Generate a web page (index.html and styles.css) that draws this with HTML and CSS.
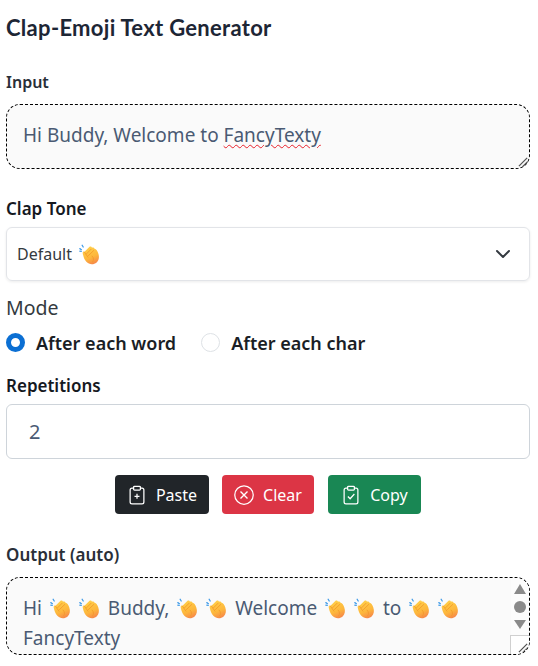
FILE: index.html
```html
<!DOCTYPE html>
<html lang="en">
<head>
    <meta charset="UTF-8">
    <meta name="viewport" content="width=device-width, initial-scale=1.0">
    <title>Clap-Emoji Text Generator</title>
    <link rel="stylesheet" href="styles.css">
</head>
<body>
    <!-- shared shapes: clap emoji and textarea resize grip -->
    <svg class="defs" width="0" height="0">
        <defs>
            <linearGradient id="clap-fill" x1="0.3" y1="0" x2="0.7" y2="1">
                <stop offset="0" stop-color="#ffd04a"/>
                <stop offset="0.6" stop-color="#fdb73c"/>
                <stop offset="1" stop-color="#f6864a"/>
            </linearGradient>
            <symbol id="clap" viewBox="0 0 20 20">
                <path d="M.8 4.400l1.500 1M3 1.200l1 1.700M.8 6.900l1.300.1" fill="none" stroke="#3f9be8" stroke-width="1.200" stroke-linecap="round"/>
                <path d="M3.600 9.200C3.200 8 4 7.200 5 7.500L9.800 2.800C10.800 2 12 2.400 12.300 3.400 13.300 3 14.500 3.500 14.800 4.600 16.500 5 17.600 6.800 18.400 9 19.400 12 19.200 15.200 16.800 17.600 14 20 9.600 19.800 7 17 5 14.800 4.200 12 3.600 9.200Z" fill="url(#clap-fill)"/>
                <path d="M7 9.500L11.500 5M9 11L14 6.200M5 7.500L8.500 12.500M12.500 11.500C14.200 13.200 14.200 15.500 13 17" fill="none" stroke="#f2992b" stroke-width="0.800" stroke-linecap="round"/>
            </symbol>
            <symbol id="grip" viewBox="0 0 12 12">
                <path d="M1 10L10 1M5 10.500L10.500 5" fill="none" stroke="#555" stroke-width="1.400"/>
            </symbol>
        </defs>
    </svg>

    <h1>Clap-Emoji Text Generator</h1>

    <label class="field-label input-label">Input</label>
    <div class="text-box input-box">
        Hi Buddy, Welcome to <span class="misspelled">FancyTexty</span>
        <svg class="grip"><use href="#grip"/></svg>
    </div>

    <label class="field-label tone-label">Clap Tone</label>
    <div class="select-box">
        <span class="select-value">Default <svg class="clap"><use href="#clap"/></svg></span>
        <svg class="chevron" viewBox="0 0 16 16" width="16" height="16"><path d="M2 5l6 6 6-6" fill="none" stroke="#343a40" stroke-width="2" stroke-linecap="round" stroke-linejoin="round"/></svg>
    </div>

    <div class="mode-title">Mode</div>
    <div class="mode-row">
        <span class="radio radio-on"></span><span class="radio-text">After each word</span>
        <span class="radio"></span><span class="radio-text">After each char</span>
    </div>

    <label class="field-label reps-label">Repetitions</label>
    <div class="number-box">2</div>

    <div class="actions">
        <button class="btn btn-dark">
            <svg viewBox="0 0 16 16" width="20" height="20"><path d="M8 7v4M6 9h4M5 2.500H4A1.500 1.500 0 0 0 2.500 4v9.500A1.500 1.500 0 0 0 4 15h8a1.500 1.500 0 0 0 1.500-1.500V4A1.500 1.500 0 0 0 12 2.500h-1M6 1h4a.7.7 0 0 1 .7.7v1.600a.7.7 0 0 1-.7.7H6a.7.7 0 0 1-.7-.7V1.700A.7.7 0 0 1 6 1z" fill="none" stroke="#fff" stroke-width="1"/></svg>
            Paste
        </button>
        <button class="btn btn-red">
            <svg viewBox="0 0 16 16" width="20" height="20"><circle cx="8" cy="8" r="7.400" fill="none" stroke="#fff" stroke-width="1"/><path d="M5.200 5.200l5.600 5.600M10.800 5.200l-5.600 5.600" fill="none" stroke="#fff" stroke-width="1.100"/></svg>
            Clear
        </button>
        <button class="btn btn-green">
            <svg viewBox="0 0 16 16" width="20" height="20"><path d="M5.500 9.200L7.300 11l3.400-3.800M5 2.500H4A1.500 1.500 0 0 0 2.500 4v9.500A1.500 1.500 0 0 0 4 15h8a1.500 1.500 0 0 0 1.500-1.500V4A1.500 1.500 0 0 0 12 2.500h-1M6 1h4a.7.7 0 0 1 .7.7v1.600a.7.7 0 0 1-.7.7H6a.7.7 0 0 1-.7-.7V1.700A.7.7 0 0 1 6 1z" fill="none" stroke="#fff" stroke-width="1"/></svg>
            Copy
        </button>
    </div>

    <label class="field-label output-label">Output (auto)</label>
    <div class="text-box output-box">
        <div class="output-text">
            Hi <svg class="clap"><use href="#clap"/></svg> <svg class="clap"><use href="#clap"/></svg> Buddy, <svg class="clap"><use href="#clap"/></svg> <svg class="clap"><use href="#clap"/></svg> Welcome <svg class="clap"><use href="#clap"/></svg> <svg class="clap"><use href="#clap"/></svg> to <svg class="clap"><use href="#clap"/></svg> <svg class="clap"><use href="#clap"/></svg> FancyTexty
        </div>
        <div class="fake-scroll">
            <span class="arrow-up"></span>
            <span class="thumb"></span>
            <span class="arrow-down"></span>
        </div>
        <div class="corner"><svg class="grip"><use href="#grip"/></svg></div>
    </div>
</body>
</html>
```

FILE: styles.css
```css
body { margin: 0; padding: 0 8px 0 6px; background: #fff; font-family: "Noto Sans", "Open Sans", sans-serif; color: #212529; }
.defs { position: absolute; }
h1 { margin: 0; padding-top: 14px; font-family: Lato, sans-serif; font-size: 22px; line-height: 28px; font-weight: 700; letter-spacing: 0.3px; color: #1d2635; }
.field-label { display: block; font-size: 17px; line-height: 22px; font-weight: 600; color: #2a2f38; }
.input-label { margin-top: 29px; font-size: 16px; }
.text-box { box-sizing: border-box; position: relative; border: 1px dashed #000; border-radius: 14px; background: #fafafa; color: #4a5a73; font-size: 19px; }
.input-box { height: 65px; margin-top: 11px; padding: 17px 16px; line-height: 27px; }
.misspelled { text-decoration: underline wavy #e8202a 1px; text-underline-offset: 2px; }
.grip { position: absolute; right: 0; bottom: 0; width: 11px; height: 11px; }
.tone-label { margin-top: 29px; color: #15191f; }
.select-box { box-sizing: border-box; display: flex; align-items: center; justify-content: space-between; height: 54px; margin-top: 7px; padding: 0 18px 0 10px; border: 1px solid #e2e4e8; border-radius: 6px; box-shadow: 0 1px 3px rgba(0,0,0,.08); font-size: 16px; color: #343a40; }
.select-value { display: flex; align-items: center; gap: 7px; }
.clap { width: 21px; height: 21px; vertical-align: -4px; }
.mode-title { margin-top: 14px; font-size: 19.500px; line-height: 26px; color: #343a40; }
.mode-row { display: flex; align-items: center; margin-top: 9px; font-size: 18px; line-height: 24px; font-weight: 600; color: #1a1e25; }
.radio { box-sizing: border-box; width: 19px; height: 19px; border: 1px solid #dee2e6; border-radius: 50%; background: #fff; }
.radio-on { border: 5px solid #0b6fd3; }
.radio-text { margin-left: 11px; margin-right: 25px; padding-top: 1px; }
.reps-label { margin-top: 20px; color: #15191f; }
.number-box { box-sizing: border-box; height: 55px; margin-top: 7px; padding: 0 22px; border: 1px solid #ced4da; border-radius: 6px; font-size: 20px; line-height: 53px; color: #4a5a73; }
.actions { display: flex; justify-content: center; gap: 13px; margin-top: 16px; }
.btn { display: flex; align-items: center; justify-content: center; gap: 9px; height: 39px; padding: 0; border: 0; border-radius: 4px; color: #fff; font-family: inherit; font-size: 16px; }
.btn-dark { width: 94px; background: #212529; }
.btn-red { width: 92px; background: #dc3545; }
.btn-green { width: 93px; margin-left: 1px; background: #198754; }
.output-label { margin-top: 30px; }
.output-box { height: 78px; margin-top: 11px; overflow: hidden; }
.output-text { padding: 15px 40px 0 16px; line-height: 30px; word-spacing: 3px; }
.fake-scroll { position: absolute; top: 0; right: 0; bottom: 18px; display: flex; flex-direction: column; align-items: center; gap: 7px; width: 18px; padding-top: 6px; background: #fcfcfc; }
.arrow-up { border: 6.500px solid transparent; border-top: 0; border-bottom: 10px solid #8a8a8a; }
.thumb { width: 12px; height: 12px; border-radius: 50%; background: #8a8a8a; }
.arrow-down { border: 6.500px solid transparent; border-bottom: 0; border-top: 9px solid #8a8a8a; }
.corner { position: absolute; right: 0; bottom: 0; width: 18px; height: 18px; border: 1px solid #d0d0d0; border-width: 1px 0 0 1px; background: #fff; }
```
